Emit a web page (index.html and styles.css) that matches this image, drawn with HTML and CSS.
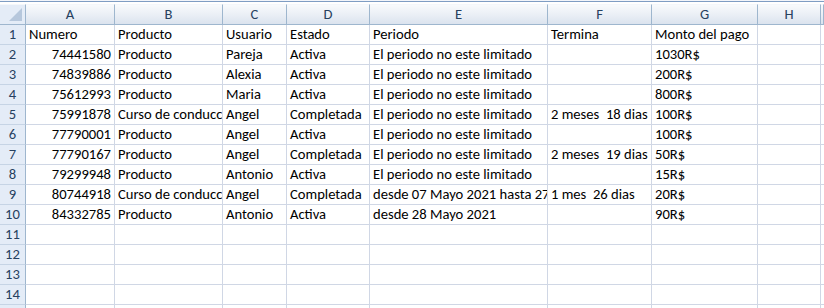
FILE: index.html
```html
<!DOCTYPE html>
<html lang="es">
<head>
<meta charset="utf-8">
<title>Hoja</title>
<link rel="stylesheet" href="styles.css">
</head>
<body>
<div class="sheet">
  <div class="topbar"></div>
  <div class="row head">
    <div class="corner"><span class="tri"></span></div>
    <div class="ch">A</div><div class="ch">B</div><div class="ch">C</div><div class="ch">D</div><div class="ch">E</div><div class="ch">F</div><div class="ch">G</div><div class="ch">H</div><div class="ch"></div>
  </div>
  <div class="row"><div class="rh">1</div><div class="c">Numero</div><div class="c">Producto</div><div class="c">Usuario</div><div class="c">Estado</div><div class="c">Periodo</div><div class="c">Termina</div><div class="c">Monto del pago</div><div class="c"></div><div class="c"></div></div>
  <div class="row"><div class="rh">2</div><div class="c n">74441580</div><div class="c">Producto</div><div class="c">Pareja</div><div class="c">Activa</div><div class="c">El periodo no este limitado</div><div class="c"></div><div class="c">1030R$</div><div class="c"></div><div class="c"></div></div>
  <div class="row"><div class="rh">3</div><div class="c n">74839886</div><div class="c">Producto</div><div class="c">Alexia</div><div class="c">Activa</div><div class="c">El periodo no este limitado</div><div class="c"></div><div class="c">200R$</div><div class="c"></div><div class="c"></div></div>
  <div class="row"><div class="rh">4</div><div class="c n">75612993</div><div class="c">Producto</div><div class="c">Maria</div><div class="c">Activa</div><div class="c">El periodo no este limitado</div><div class="c"></div><div class="c">800R$</div><div class="c"></div><div class="c"></div></div>
  <div class="row"><div class="rh">5</div><div class="c n">75991878</div><div class="c">Curso de conducción</div><div class="c">Angel</div><div class="c">Completada</div><div class="c">El periodo no este limitado</div><div class="c">2 meses&nbsp; 18 dias</div><div class="c">100R$</div><div class="c"></div><div class="c"></div></div>
  <div class="row"><div class="rh">6</div><div class="c n">77790001</div><div class="c">Producto</div><div class="c">Angel</div><div class="c">Activa</div><div class="c">El periodo no este limitado</div><div class="c"></div><div class="c">100R$</div><div class="c"></div><div class="c"></div></div>
  <div class="row"><div class="rh">7</div><div class="c n">77790167</div><div class="c">Producto</div><div class="c">Angel</div><div class="c">Completada</div><div class="c">El periodo no este limitado</div><div class="c">2 meses&nbsp; 19 dias</div><div class="c">50R$</div><div class="c"></div><div class="c"></div></div>
  <div class="row"><div class="rh">8</div><div class="c n">79299948</div><div class="c">Producto</div><div class="c">Antonio</div><div class="c">Activa</div><div class="c">El periodo no este limitado</div><div class="c"></div><div class="c">15R$</div><div class="c"></div><div class="c"></div></div>
  <div class="row"><div class="rh">9</div><div class="c n">80744918</div><div class="c">Curso de conducción</div><div class="c">Angel</div><div class="c">Completada</div><div class="c">desde 07 Mayo 2021 hasta 27 Julio 2021</div><div class="c">1 mes&nbsp; 26 dias</div><div class="c">20R$</div><div class="c"></div><div class="c"></div></div>
  <div class="row"><div class="rh">10</div><div class="c n">84332785</div><div class="c">Producto</div><div class="c">Antonio</div><div class="c">Activa</div><div class="c">desde 28 Mayo 2021</div><div class="c"></div><div class="c">90R$</div><div class="c"></div><div class="c"></div></div>
  <div class="row"><div class="rh">11</div><div class="c"></div><div class="c"></div><div class="c"></div><div class="c"></div><div class="c"></div><div class="c"></div><div class="c"></div><div class="c"></div><div class="c"></div></div>
  <div class="row"><div class="rh">12</div><div class="c"></div><div class="c"></div><div class="c"></div><div class="c"></div><div class="c"></div><div class="c"></div><div class="c"></div><div class="c"></div><div class="c"></div></div>
  <div class="row"><div class="rh">13</div><div class="c"></div><div class="c"></div><div class="c"></div><div class="c"></div><div class="c"></div><div class="c"></div><div class="c"></div><div class="c"></div><div class="c"></div></div>
  <div class="row"><div class="rh">14</div><div class="c"></div><div class="c"></div><div class="c"></div><div class="c"></div><div class="c"></div><div class="c"></div><div class="c"></div><div class="c"></div><div class="c"></div></div>
  <div class="row"><div class="rh">15</div><div class="c"></div><div class="c"></div><div class="c"></div><div class="c"></div><div class="c"></div><div class="c"></div><div class="c"></div><div class="c"></div><div class="c"></div></div>
</div>
</body>
</html>
```
FILE: styles.css
```css
html, body {
  margin: 0;
  padding: 0;
  background: #ffffff;
  overflow: hidden;
}
.sheet {
  width: 824px;
  height: 308px;
  overflow: hidden;
  font-family: "Carlito", "Lato", "Liberation Sans", sans-serif;
  font-size: 14.6px;
  color: #000000;
}
.topbar {
  height: 4px;
  box-sizing: border-box;
  border-top: 1px solid #f2f5fa;
  background: linear-gradient(#7f9dc3 0, #7f9dc3 1px, #ffffff 1px);
  background-size: 100% 3px;
  background-repeat: no-repeat;
}
.row {
  display: grid;
  grid-template-columns: 26px 89px 108px 64px 83px 178px 104px 106px 63px 3px;
  height: 20px;
}
.row.head {
  height: 21px;
}
.row > div {
  box-sizing: border-box;
  border-right: 1px solid #d0d7e5;
  border-bottom: 1px solid #d0d7e5;
  overflow: hidden;
  white-space: nowrap;
  line-height: 19px;
}
.head > div {
  background: linear-gradient(#f8fafc, #e9eef5 55%, #dbe3ee);
  border-right: 1px solid #9eb6ce;
  border-bottom: 1px solid #9eb6ce;
  border-top: 1px solid #f4f7fb;
  color: #27415f;
  text-align: center;
  line-height: 18px;
}
.head > .corner {
  position: relative;
  background: #e4ecf7;
}
.tri {
  position: absolute;
  right: 3px;
  bottom: 3px;
  width: 0;
  height: 0;
  border-left: 13px solid transparent;
  border-bottom: 13px solid #b6c7dc;
}
.row > .rh {
  background: #e4ecf7;
  border-right: 1px solid #9eb6ce;
  border-bottom: 1px solid #c6d4e5;
  color: #27415f;
  text-align: center;
}
.c {
  padding: 0 2px 0 3px;
}
.c.n {
  text-align: right;
  padding-right: 3px;
}
```
